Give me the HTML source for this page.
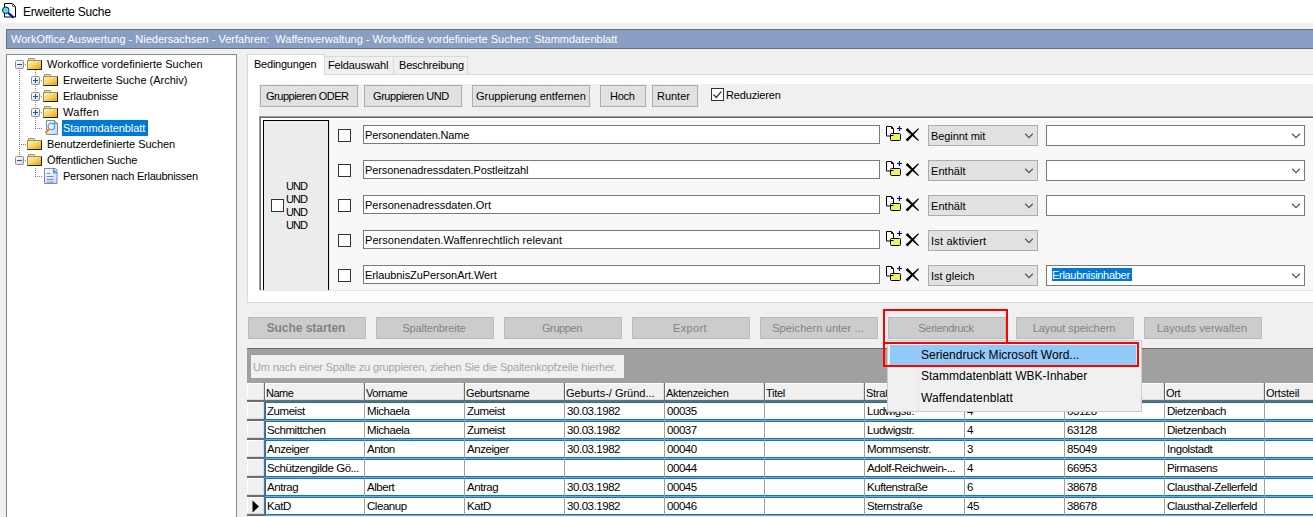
<!DOCTYPE html>
<html><head><meta charset="utf-8"><style>
*{box-sizing:border-box;margin:0;padding:0}
html,body{width:1313px;height:517px;overflow:hidden;background:#f0f0f0;font-family:"Liberation Sans",sans-serif;font-size:11px;color:#000}
body{position:relative}
.a{position:absolute}
.t{position:absolute;white-space:pre;line-height:14px}
svg{position:absolute;overflow:visible}
</style></head><body>
<div class="a" style="left:0px;top:0px;width:1313px;height:23px;background:#fff"></div>
<svg style="left:0;top:0" width="20" height="20" viewBox="0 0 20 20">
<path d="M4.5 3.5h8l3 3v10.5h-11z" fill="#fff" stroke="#000" stroke-width="1"/>
<path d="M12.5 3.5v3h3" fill="none" stroke="#777" stroke-width="1"/>
<path d="M9 13.5l4 3.5" stroke="#0000e0" stroke-width="2.2" stroke-linecap="round"/>
<circle cx="5.8" cy="10.3" r="3.3" fill="#38e8f0" stroke="#222" stroke-width="1"/>
</svg>
<div class="t" style="left:23px;top:5px;font-size:12px;letter-spacing:-0.233px">Erweiterte Suche</div>
<div class="a" style="left:6px;top:29px;width:1320px;height:20px;background:#889ec2;border:1px solid #6d6d6d"></div>
<div class="t" style="left:11px;top:32px;color:#fff">WorkOffice Auswertung - Niedersachsen - Verfahren:  Waffenverwaltung - Workoffice vordefinierte Suchen: Stammdatenblatt</div>
<div class="a" style="left:6px;top:54px;width:231px;height:480px;background:#fff;border:1px solid #828790"></div>
<div class="a" style="left:19px;top:70px;width:1px;height:85px;background:repeating-linear-gradient(#808080 0 1px,transparent 1px 2px)"></div>
<div class="a" style="left:21px;top:144px;width:5px;height:1px;background:repeating-linear-gradient(90deg,#808080 0 1px,transparent 1px 2px)"></div>
<div class="a" style="left:25px;top:64px;width:1px;height:1px;background:repeating-linear-gradient(90deg,#808080 0 1px,transparent 1px 2px)"></div>
<div class="a" style="left:25px;top:160px;width:1px;height:1px;background:repeating-linear-gradient(90deg,#808080 0 1px,transparent 1px 2px)"></div>
<div class="a" style="left:35px;top:70px;width:1px;height:5px;background:repeating-linear-gradient(#808080 0 1px,transparent 1px 2px)"></div>
<div class="a" style="left:35px;top:86px;width:1px;height:5px;background:repeating-linear-gradient(#808080 0 1px,transparent 1px 2px)"></div>
<div class="a" style="left:35px;top:102px;width:1px;height:5px;background:repeating-linear-gradient(#808080 0 1px,transparent 1px 2px)"></div>
<div class="a" style="left:35px;top:118px;width:1px;height:11px;background:repeating-linear-gradient(#808080 0 1px,transparent 1px 2px)"></div>
<div class="a" style="left:41px;top:80px;width:1px;height:1px;background:repeating-linear-gradient(90deg,#808080 0 1px,transparent 1px 2px)"></div>
<div class="a" style="left:41px;top:96px;width:1px;height:1px;background:repeating-linear-gradient(90deg,#808080 0 1px,transparent 1px 2px)"></div>
<div class="a" style="left:41px;top:112px;width:1px;height:1px;background:repeating-linear-gradient(90deg,#808080 0 1px,transparent 1px 2px)"></div>
<div class="a" style="left:37px;top:128px;width:5px;height:1px;background:repeating-linear-gradient(90deg,#808080 0 1px,transparent 1px 2px)"></div>
<div class="a" style="left:35px;top:168px;width:1px;height:9px;background:repeating-linear-gradient(#808080 0 1px,transparent 1px 2px)"></div>
<div class="a" style="left:37px;top:176px;width:5px;height:1px;background:repeating-linear-gradient(90deg,#808080 0 1px,transparent 1px 2px)"></div>
<svg style="left:15px;top:60px" width="9" height="9" viewBox="0 0 9 9"><defs><linearGradient id="pg" x1="0" y1="0" x2="1" y2="1"><stop offset="0" stop-color="#fff"/><stop offset="1" stop-color="#d4d4d4"/></linearGradient></defs>
<rect x="0.5" y="0.5" width="8" height="8" rx="1" fill="url(#pg)" stroke="#8f8f8f"/><path d="M2 4.5h5" stroke="#2a4c9c" stroke-width="1"/></svg>
<svg style="left:27px;top:56px" width="16" height="16" viewBox="0 0 16 16"><defs><linearGradient id="fg" x1="0" y1="0" x2="1" y2="1"><stop offset="0" stop-color="#fff8c0"/><stop offset="0.55" stop-color="#f5cf55"/><stop offset="1" stop-color="#e3961c"/></linearGradient></defs>
<path d="M1.5 4.5V2.5h5.5l1 2" fill="#f6e6a0" stroke="#9b8f70"/>
<rect x="0.5" y="4.5" width="14" height="9" fill="url(#fg)" stroke="#9b8f70"/>
<path d="M14.5 4.5v9h-14" fill="none" stroke="#2a1f0c"/>
</svg>
<div class="t" style="left:47px;top:57px">Workoffice vordefinierte Suchen</div>
<svg style="left:31px;top:76px" width="9" height="9" viewBox="0 0 9 9">
<rect x="0.5" y="0.5" width="8" height="8" rx="1" fill="url(#pg)" stroke="#8f8f8f"/><path d="M2 4.5h5" stroke="#2a4c9c" stroke-width="1"/><path d="M4.5 2v5" stroke="#2a4c9c" stroke-width="1"/></svg>
<svg style="left:43px;top:72px" width="16" height="16" viewBox="0 0 16 16">
<path d="M1.5 4.5V2.5h5.5l1 2" fill="#f6e6a0" stroke="#9b8f70"/>
<rect x="0.5" y="4.5" width="14" height="9" fill="url(#fg)" stroke="#9b8f70"/>
<path d="M14.5 4.5v9h-14" fill="none" stroke="#2a1f0c"/>
</svg>
<div class="t" style="left:63px;top:73px;letter-spacing:-0.012px">Erweiterte Suche (Archiv)</div>
<svg style="left:31px;top:92px" width="9" height="9" viewBox="0 0 9 9">
<rect x="0.5" y="0.5" width="8" height="8" rx="1" fill="url(#pg)" stroke="#8f8f8f"/><path d="M2 4.5h5" stroke="#2a4c9c" stroke-width="1"/><path d="M4.5 2v5" stroke="#2a4c9c" stroke-width="1"/></svg>
<svg style="left:43px;top:88px" width="16" height="16" viewBox="0 0 16 16">
<path d="M1.5 4.5V2.5h5.5l1 2" fill="#f6e6a0" stroke="#9b8f70"/>
<rect x="0.5" y="4.5" width="14" height="9" fill="url(#fg)" stroke="#9b8f70"/>
<path d="M14.5 4.5v9h-14" fill="none" stroke="#2a1f0c"/>
</svg>
<div class="t" style="left:63px;top:89px;letter-spacing:-0.23px">Erlaubnisse</div>
<svg style="left:31px;top:108px" width="9" height="9" viewBox="0 0 9 9">
<rect x="0.5" y="0.5" width="8" height="8" rx="1" fill="url(#pg)" stroke="#8f8f8f"/><path d="M2 4.5h5" stroke="#2a4c9c" stroke-width="1"/><path d="M4.5 2v5" stroke="#2a4c9c" stroke-width="1"/></svg>
<svg style="left:43px;top:104px" width="16" height="16" viewBox="0 0 16 16">
<path d="M1.5 4.5V2.5h5.5l1 2" fill="#f6e6a0" stroke="#9b8f70"/>
<rect x="0.5" y="4.5" width="14" height="9" fill="url(#fg)" stroke="#9b8f70"/>
<path d="M14.5 4.5v9h-14" fill="none" stroke="#2a1f0c"/>
</svg>
<div class="t" style="left:63px;top:105px;letter-spacing:0.32px">Waffen</div>
<svg style="left:43px;top:119px" width="16" height="17" viewBox="0 0 16 17">
<defs><linearGradient id="dg" x1="0" y1="0" x2="1" y2="1"><stop offset="0" stop-color="#ffffff"/><stop offset="1" stop-color="#bcd8f4"/></linearGradient></defs>
<path d="M3.5 1.5h8l3 3v11h-11z" fill="url(#dg)" stroke="#6d86c4"/>
<path d="M11.5 1.5v3h3" fill="#9cc8f0" stroke="#6d86c4"/>
<circle cx="8.4" cy="7.4" r="3.2" fill="#dff4ff" stroke="#6d8ccc" stroke-width="1.2"/>
<path d="M5.8 10.2l-2.8 3.2" stroke="#e0902a" stroke-width="2.2" stroke-linecap="round"/>
</svg>
<div class="a" style="left:62px;top:120px;width:86px;height:16px;background:#0078d7"></div>
<div class="t" style="left:63px;top:121px;letter-spacing:-0.057px;color:#fff">Stammdatenblatt</div>
<svg style="left:27px;top:136px" width="16" height="16" viewBox="0 0 16 16">
<path d="M1.5 4.5V2.5h5.5l1 2" fill="#f6e6a0" stroke="#9b8f70"/>
<rect x="0.5" y="4.5" width="14" height="9" fill="url(#fg)" stroke="#9b8f70"/>
<path d="M14.5 4.5v9h-14" fill="none" stroke="#2a1f0c"/>
</svg>
<div class="t" style="left:47px;top:137px;letter-spacing:-0.062px">Benutzerdefinierte Suchen</div>
<svg style="left:15px;top:156px" width="9" height="9" viewBox="0 0 9 9">
<rect x="0.5" y="0.5" width="8" height="8" rx="1" fill="url(#pg)" stroke="#8f8f8f"/><path d="M2 4.5h5" stroke="#2a4c9c" stroke-width="1"/></svg>
<svg style="left:27px;top:152px" width="16" height="16" viewBox="0 0 16 16">
<path d="M1.5 4.5V2.5h5.5l1 2" fill="#f6e6a0" stroke="#9b8f70"/>
<rect x="0.5" y="4.5" width="14" height="9" fill="url(#fg)" stroke="#9b8f70"/>
<path d="M14.5 4.5v9h-14" fill="none" stroke="#2a1f0c"/>
</svg>
<div class="t" style="left:47px;top:153px;letter-spacing:-0.147px">Öffentlichen Suche</div>
<svg style="left:43px;top:167px" width="16" height="17" viewBox="0 0 16 17">
<defs><linearGradient id="dg2" x1="0" y1="0" x2="1" y2="1"><stop offset="0" stop-color="#ffffff"/><stop offset="1" stop-color="#b8dcf6"/></linearGradient></defs>
<path d="M1.5 1.5h11l1.5 1.5v13.5h-12.5z" fill="url(#dg2)" stroke="#7a86c0"/>
<path d="M10.5 1.5v4.5h4" fill="#5aa8ee" stroke="#7a86c0"/>
<path d="M3.5 6.5h3.5M3.5 9.5h7M3.5 12.5h7M3.5 15h7" stroke="#7f86b8" stroke-width="1"/>
</svg>
<div class="t" style="left:63px;top:169px;letter-spacing:-0.224px">Personen nach Erlaubnissen</div>
<div class="a" style="left:247px;top:74px;width:1080px;height:229px;background:#fff;border:1px solid #d9d9d9"></div>
<div class="a" style="left:324px;top:56px;width:70px;height:19px;background:#f0f0f0;border:1px solid #d9d9d9"></div>
<div class="a" style="left:393px;top:56px;width:75px;height:19px;background:#f0f0f0;border:1px solid #d9d9d9"></div>
<div class="a" style="left:247px;top:54px;width:78px;height:21px;background:#fff;border:1px solid #d9d9d9;border-bottom:none"></div>
<div class="a" style="left:248px;top:74px;width:76px;height:1px;background:#fff"></div>
<div class="t" style="left:254px;top:57px;letter-spacing:-0.23px">Bedingungen</div>
<div class="t" style="left:328px;top:58px;letter-spacing:-0.14px">Feldauswahl</div>
<div class="t" style="left:399px;top:58px;letter-spacing:-0.2px">Beschreibung</div>
<div class="a" style="left:259px;top:84px;width:1060px;height:32px;background:#f0f0f0"></div>
<div class="a" style="left:260px;top:85px;width:98px;height:22px;background:#e1e1e1;border:1px solid #adadad"></div>
<div class="t" style="left:266px;top:89px;letter-spacing:-0.486px">Gruppieren ODER</div>
<div class="a" style="left:364px;top:85px;width:98px;height:22px;background:#e1e1e1;border:1px solid #adadad"></div>
<div class="t" style="left:373px;top:89px;letter-spacing:-0.431px">Gruppieren UND</div>
<div class="a" style="left:472px;top:85px;width:118px;height:22px;background:#e1e1e1;border:1px solid #adadad"></div>
<div class="t" style="left:476px;top:89px;letter-spacing:-0.045px">Gruppierung entfernen</div>
<div class="a" style="left:600px;top:85px;width:46px;height:22px;background:#e1e1e1;border:1px solid #adadad"></div>
<div class="t" style="left:610px;top:89px;letter-spacing:-0.233px">Hoch</div>
<div class="a" style="left:652px;top:85px;width:46px;height:22px;background:#e1e1e1;border:1px solid #adadad"></div>
<div class="t" style="left:657px;top:89px;letter-spacing:-0.02px">Runter</div>
<div class="a" style="left:711px;top:88px;width:13px;height:13px;background:#fff;border:1px solid #333"></div>
<svg style="left:711px;top:88px" width="13" height="13" viewBox="0 0 13 13"><path d="M2.5 6.5l2.8 3 5-6" fill="none" stroke="#333" stroke-width="1.2"/></svg>
<div class="t" style="left:726px;top:88px;letter-spacing:-0.156px">Reduzieren</div>
<div class="a" style="left:259px;top:116px;width:1060px;height:175px;background:#f8f8f8"></div>
<div class="a" style="left:259px;top:116px;width:1060px;height:1px;background:#a0a0a0"></div>
<div class="a" style="left:259px;top:117px;width:1060px;height:1px;background:#696969"></div>
<div class="a" style="left:259px;top:116px;width:1px;height:175px;background:#a0a0a0"></div>
<div class="a" style="left:260px;top:117px;width:1px;height:174px;background:#696969"></div>
<div class="a" style="left:261px;top:118px;width:1060px;height:2px;background:#fff"></div>
<div class="a" style="left:261px;top:118px;width:2px;height:173px;background:#fff"></div>
<div class="a" style="left:263px;top:120px;width:66px;height:171px;background:#ececec;border:1px solid #000;border-bottom:none"></div>
<div class="a" style="left:329px;top:120px;width:1px;height:170px;background:#e2efff"></div>
<div class="a" style="left:259px;top:290px;width:1060px;height:1px;background:#e3e3e3"></div>
<div class="a" style="left:271px;top:199px;width:13px;height:13px;background:#fff;border:1px solid #333"></div>
<div class="t" style="left:286px;top:179px;letter-spacing:-1.0px">UND</div>
<div class="t" style="left:286px;top:192px;letter-spacing:-1.0px">UND</div>
<div class="t" style="left:286px;top:205px;letter-spacing:-1.0px">UND</div>
<div class="t" style="left:286px;top:218px;letter-spacing:-1.0px">UND</div>
<div class="a" style="left:338px;top:129px;width:13px;height:13px;background:#fff;border:1px solid #333"></div>
<div class="a" style="left:363px;top:125px;width:517px;height:19px;background:#fff;border:1px solid #7a7a7a"></div>
<div class="t" style="left:365px;top:128px;letter-spacing:-0.153px">Personendaten.Name</div>
<svg style="left:886px;top:126px" width="17" height="16" viewBox="0 0 17 16">
<path d="M0.5 0.5h5l2 2v7.5h-7z" fill="#fff" stroke="#000"/>
<path d="M5.5 0.5v2h2" fill="none" stroke="#000"/>
<rect x="4.5" y="7.5" width="10" height="7" rx="1" fill="#f2f25a" stroke="#000"/>
<path d="M4.5 9.5h3" stroke="#000"/>
<path d="M13.5 0v5M11 2.5h5" stroke="#00008b" stroke-width="1.2"/>
</svg>
<svg style="left:905px;top:128px" width="15" height="14" viewBox="0 0 15 14">
<path d="M0.63 2.01 L13.22 13.00 L13.98 12.20 L2.57 -0.01z M13.21 0.21 L0.62 11.40 L2.58 13.40 L13.99 0.99z" fill="#000"/>
</svg>
<div class="a" style="left:928px;top:125px;width:110px;height:21px;background:#e1e1e1;border:1px solid #adadad"></div>
<div class="t" style="left:931px;top:129px;letter-spacing:-0.08px">Beginnt mit</div>
<svg style="left:1024px;top:133px" width="10" height="6" viewBox="0 0 10 6"><path d="M1.2 0.8l3.8 3.9l3.8-3.9" fill="none" stroke="#555" stroke-width="1.25"/></svg>
<div class="a" style="left:1046px;top:125px;width:259px;height:21px;background:#fff;border:1px solid #7a7a7a"></div>
<svg style="left:1291px;top:133px" width="10" height="6" viewBox="0 0 10 6"><path d="M1.2 0.8l3.8 3.9l3.8-3.9" fill="none" stroke="#555" stroke-width="1.25"/></svg>
<div class="a" style="left:338px;top:164px;width:13px;height:13px;background:#fff;border:1px solid #333"></div>
<div class="a" style="left:363px;top:160px;width:517px;height:19px;background:#fff;border:1px solid #7a7a7a"></div>
<div class="t" style="left:365px;top:163px;letter-spacing:-0.11px">Personenadressdaten.Postleitzahl</div>
<svg style="left:886px;top:161px" width="17" height="16" viewBox="0 0 17 16">
<path d="M0.5 0.5h5l2 2v7.5h-7z" fill="#fff" stroke="#000"/>
<path d="M5.5 0.5v2h2" fill="none" stroke="#000"/>
<rect x="4.5" y="7.5" width="10" height="7" rx="1" fill="#f2f25a" stroke="#000"/>
<path d="M4.5 9.5h3" stroke="#000"/>
<path d="M13.5 0v5M11 2.5h5" stroke="#00008b" stroke-width="1.2"/>
</svg>
<svg style="left:905px;top:163px" width="15" height="14" viewBox="0 0 15 14">
<path d="M0.63 2.01 L13.22 13.00 L13.98 12.20 L2.57 -0.01z M13.21 0.21 L0.62 11.40 L2.58 13.40 L13.99 0.99z" fill="#000"/>
</svg>
<div class="a" style="left:928px;top:160px;width:110px;height:21px;background:#e1e1e1;border:1px solid #adadad"></div>
<div class="t" style="left:931px;top:164px;letter-spacing:0.05px">Enthält</div>
<svg style="left:1024px;top:168px" width="10" height="6" viewBox="0 0 10 6"><path d="M1.2 0.8l3.8 3.9l3.8-3.9" fill="none" stroke="#555" stroke-width="1.25"/></svg>
<div class="a" style="left:1046px;top:160px;width:259px;height:21px;background:#fff;border:1px solid #7a7a7a"></div>
<svg style="left:1291px;top:168px" width="10" height="6" viewBox="0 0 10 6"><path d="M1.2 0.8l3.8 3.9l3.8-3.9" fill="none" stroke="#555" stroke-width="1.25"/></svg>
<div class="a" style="left:338px;top:199px;width:13px;height:13px;background:#fff;border:1px solid #333"></div>
<div class="a" style="left:363px;top:195px;width:517px;height:19px;background:#fff;border:1px solid #7a7a7a"></div>
<div class="t" style="left:365px;top:198px;letter-spacing:0.005px">Personenadressdaten.Ort</div>
<svg style="left:886px;top:196px" width="17" height="16" viewBox="0 0 17 16">
<path d="M0.5 0.5h5l2 2v7.5h-7z" fill="#fff" stroke="#000"/>
<path d="M5.5 0.5v2h2" fill="none" stroke="#000"/>
<rect x="4.5" y="7.5" width="10" height="7" rx="1" fill="#f2f25a" stroke="#000"/>
<path d="M4.5 9.5h3" stroke="#000"/>
<path d="M13.5 0v5M11 2.5h5" stroke="#00008b" stroke-width="1.2"/>
</svg>
<svg style="left:905px;top:198px" width="15" height="14" viewBox="0 0 15 14">
<path d="M0.63 2.01 L13.22 13.00 L13.98 12.20 L2.57 -0.01z M13.21 0.21 L0.62 11.40 L2.58 13.40 L13.99 0.99z" fill="#000"/>
</svg>
<div class="a" style="left:928px;top:195px;width:110px;height:21px;background:#e1e1e1;border:1px solid #adadad"></div>
<div class="t" style="left:931px;top:199px;letter-spacing:0.05px">Enthält</div>
<svg style="left:1024px;top:203px" width="10" height="6" viewBox="0 0 10 6"><path d="M1.2 0.8l3.8 3.9l3.8-3.9" fill="none" stroke="#555" stroke-width="1.25"/></svg>
<div class="a" style="left:1046px;top:195px;width:259px;height:21px;background:#fff;border:1px solid #7a7a7a"></div>
<svg style="left:1291px;top:203px" width="10" height="6" viewBox="0 0 10 6"><path d="M1.2 0.8l3.8 3.9l3.8-3.9" fill="none" stroke="#555" stroke-width="1.25"/></svg>
<div class="a" style="left:338px;top:234px;width:13px;height:13px;background:#fff;border:1px solid #333"></div>
<div class="a" style="left:363px;top:230px;width:517px;height:19px;background:#fff;border:1px solid #7a7a7a"></div>
<div class="t" style="left:365px;top:233px;letter-spacing:0.054px">Personendaten.Waffenrechtlich relevant</div>
<svg style="left:886px;top:231px" width="17" height="16" viewBox="0 0 17 16">
<path d="M0.5 0.5h5l2 2v7.5h-7z" fill="#fff" stroke="#000"/>
<path d="M5.5 0.5v2h2" fill="none" stroke="#000"/>
<rect x="4.5" y="7.5" width="10" height="7" rx="1" fill="#f2f25a" stroke="#000"/>
<path d="M4.5 9.5h3" stroke="#000"/>
<path d="M13.5 0v5M11 2.5h5" stroke="#00008b" stroke-width="1.2"/>
</svg>
<svg style="left:905px;top:233px" width="15" height="14" viewBox="0 0 15 14">
<path d="M0.63 2.01 L13.22 13.00 L13.98 12.20 L2.57 -0.01z M13.21 0.21 L0.62 11.40 L2.58 13.40 L13.99 0.99z" fill="#000"/>
</svg>
<div class="a" style="left:928px;top:230px;width:110px;height:21px;background:#e1e1e1;border:1px solid #adadad"></div>
<div class="t" style="left:931px;top:234px;letter-spacing:0.208px">Ist aktiviert</div>
<svg style="left:1024px;top:238px" width="10" height="6" viewBox="0 0 10 6"><path d="M1.2 0.8l3.8 3.9l3.8-3.9" fill="none" stroke="#555" stroke-width="1.25"/></svg>
<div class="a" style="left:338px;top:269px;width:13px;height:13px;background:#fff;border:1px solid #333"></div>
<div class="a" style="left:363px;top:265px;width:517px;height:19px;background:#fff;border:1px solid #7a7a7a"></div>
<div class="t" style="left:365px;top:268px;letter-spacing:-0.083px">ErlaubnisZuPersonArt.Wert</div>
<svg style="left:886px;top:266px" width="17" height="16" viewBox="0 0 17 16">
<path d="M0.5 0.5h5l2 2v7.5h-7z" fill="#fff" stroke="#000"/>
<path d="M5.5 0.5v2h2" fill="none" stroke="#000"/>
<rect x="4.5" y="7.5" width="10" height="7" rx="1" fill="#f2f25a" stroke="#000"/>
<path d="M4.5 9.5h3" stroke="#000"/>
<path d="M13.5 0v5M11 2.5h5" stroke="#00008b" stroke-width="1.2"/>
</svg>
<svg style="left:905px;top:268px" width="15" height="14" viewBox="0 0 15 14">
<path d="M0.63 2.01 L13.22 13.00 L13.98 12.20 L2.57 -0.01z M13.21 0.21 L0.62 11.40 L2.58 13.40 L13.99 0.99z" fill="#000"/>
</svg>
<div class="a" style="left:928px;top:265px;width:110px;height:21px;background:#e1e1e1;border:1px solid #adadad"></div>
<div class="t" style="left:931px;top:269px;letter-spacing:-0.011px">Ist gleich</div>
<svg style="left:1024px;top:273px" width="10" height="6" viewBox="0 0 10 6"><path d="M1.2 0.8l3.8 3.9l3.8-3.9" fill="none" stroke="#555" stroke-width="1.25"/></svg>
<div class="a" style="left:1046px;top:265px;width:259px;height:21px;background:#fff;border:1px solid #7a7a7a"></div>
<svg style="left:1291px;top:273px" width="10" height="6" viewBox="0 0 10 6"><path d="M1.2 0.8l3.8 3.9l3.8-3.9" fill="none" stroke="#555" stroke-width="1.25"/></svg>
<div class="a" style="left:1052px;top:268px;width:80px;height:13px;background:#0078d7"></div>
<div class="t" style="left:1052px;top:268px;letter-spacing:-0.3px;color:#fff">Erlaubnisinhaber</div>
<div class="a" style="left:248px;top:317px;width:118px;height:22px;background:#cccccc;border:1px solid #bcbcbc"></div>
<div class="t" style="left:247px;top:321px;width:118px;text-align:center;color:#838383;letter-spacing:-0.05px;font-weight:bold;font-size:12px;">Suche starten</div>
<div class="a" style="left:376px;top:317px;width:118px;height:22px;background:#cccccc;border:1px solid #bcbcbc"></div>
<div class="t" style="left:375px;top:321px;width:118px;text-align:center;color:#838383;letter-spacing:-0.125px;">Spaltenbreite</div>
<div class="a" style="left:504px;top:317px;width:118px;height:22px;background:#cccccc;border:1px solid #bcbcbc"></div>
<div class="t" style="left:503px;top:321px;width:118px;text-align:center;color:#838383;letter-spacing:-0.383px;">Gruppen</div>
<div class="a" style="left:632px;top:317px;width:118px;height:22px;background:#cccccc;border:1px solid #bcbcbc"></div>
<div class="t" style="left:631px;top:321px;width:118px;text-align:center;color:#838383;letter-spacing:0.34px;">Export</div>
<div class="a" style="left:760px;top:317px;width:118px;height:22px;background:#cccccc;border:1px solid #bcbcbc"></div>
<div class="t" style="left:759px;top:321px;width:118px;text-align:center;color:#838383;letter-spacing:0.094px;">Speichern unter ...</div>
<div class="a" style="left:888px;top:317px;width:118px;height:22px;background:#cccccc;border:1px solid #bcbcbc"></div>
<div class="t" style="left:887px;top:321px;width:118px;text-align:center;color:#838383;letter-spacing:-0.31px;">Seriendruck</div>
<div class="a" style="left:1016px;top:317px;width:118px;height:22px;background:#cccccc;border:1px solid #bcbcbc"></div>
<div class="t" style="left:1015px;top:321px;width:118px;text-align:center;color:#838383;letter-spacing:-0.067px;">Layout speichern</div>
<div class="a" style="left:1144px;top:317px;width:118px;height:22px;background:#cccccc;border:1px solid #bcbcbc"></div>
<div class="t" style="left:1143px;top:321px;width:118px;text-align:center;color:#838383;letter-spacing:0.106px;">Layouts verwalten</div>
<div class="a" style="left:247px;top:348px;width:1070px;height:35px;background:#a0a0a0;border-top:1px solid #696969"></div>
<div class="a" style="left:251px;top:355px;width:373px;height:23px;background:#f0f0f0"></div>
<div class="t" style="left:253px;top:360px;letter-spacing:-0.147px;color:#a2a4b0">Um nach einer Spalte zu gruppieren, ziehen Sie die Spaltenkopfzeile hierher.</div>
<div class="a" style="left:247px;top:383px;width:1070px;height:16px;background:#f0f0f0"></div>
<div class="a" style="left:247px;top:383px;width:1070px;height:1px;background:#fff"></div>
<div class="a" style="left:247px;top:383px;width:1px;height:16px;background:#fff"></div>
<div class="a" style="left:247px;top:399px;width:1070px;height:1px;background:#dcdcdc"></div>
<div class="a" style="left:247px;top:400px;width:1070px;height:2px;background:#6d6d6d"></div>
<div class="a" style="left:263px;top:383px;width:1px;height:17px;background:#dcdcdc"></div>
<div class="a" style="left:264px;top:383px;width:1px;height:19px;background:#6d6d6d"></div>
<div class="a" style="left:265px;top:383px;width:1px;height:16px;background:#fff"></div>
<div class="t" style="left:266px;top:386px;letter-spacing:-0.5px">Name</div>
<div class="a" style="left:363px;top:383px;width:1px;height:17px;background:#dcdcdc"></div>
<div class="a" style="left:364px;top:383px;width:1px;height:19px;background:#6d6d6d"></div>
<div class="a" style="left:365px;top:383px;width:1px;height:16px;background:#fff"></div>
<div class="t" style="left:366px;top:386px;letter-spacing:-0.4px">Vorname</div>
<div class="a" style="left:463px;top:383px;width:1px;height:17px;background:#dcdcdc"></div>
<div class="a" style="left:464px;top:383px;width:1px;height:19px;background:#6d6d6d"></div>
<div class="a" style="left:465px;top:383px;width:1px;height:16px;background:#fff"></div>
<div class="t" style="left:466px;top:386px;letter-spacing:-0.3px">Geburtsname</div>
<div class="a" style="left:563px;top:383px;width:1px;height:17px;background:#dcdcdc"></div>
<div class="a" style="left:564px;top:383px;width:1px;height:19px;background:#6d6d6d"></div>
<div class="a" style="left:565px;top:383px;width:1px;height:16px;background:#fff"></div>
<div class="t" style="left:566px;top:386px">Geburts-/ Gründ...</div>
<div class="a" style="left:663px;top:383px;width:1px;height:17px;background:#dcdcdc"></div>
<div class="a" style="left:664px;top:383px;width:1px;height:19px;background:#6d6d6d"></div>
<div class="a" style="left:665px;top:383px;width:1px;height:16px;background:#fff"></div>
<div class="t" style="left:666px;top:386px;letter-spacing:-0.3px">Aktenzeichen</div>
<div class="a" style="left:763px;top:383px;width:1px;height:17px;background:#dcdcdc"></div>
<div class="a" style="left:764px;top:383px;width:1px;height:19px;background:#6d6d6d"></div>
<div class="a" style="left:765px;top:383px;width:1px;height:16px;background:#fff"></div>
<div class="t" style="left:766px;top:386px;letter-spacing:-0.3px">Titel</div>
<div class="a" style="left:863px;top:383px;width:1px;height:17px;background:#dcdcdc"></div>
<div class="a" style="left:864px;top:383px;width:1px;height:19px;background:#6d6d6d"></div>
<div class="a" style="left:865px;top:383px;width:1px;height:16px;background:#fff"></div>
<div class="t" style="left:866px;top:386px;letter-spacing:-0.3px">Straße</div>
<div class="a" style="left:963px;top:383px;width:1px;height:17px;background:#dcdcdc"></div>
<div class="a" style="left:964px;top:383px;width:1px;height:19px;background:#6d6d6d"></div>
<div class="a" style="left:965px;top:383px;width:1px;height:16px;background:#fff"></div>
<div class="t" style="left:966px;top:386px;letter-spacing:-0.3px">Hausnummer</div>
<div class="a" style="left:1063px;top:383px;width:1px;height:17px;background:#dcdcdc"></div>
<div class="a" style="left:1064px;top:383px;width:1px;height:19px;background:#6d6d6d"></div>
<div class="a" style="left:1065px;top:383px;width:1px;height:16px;background:#fff"></div>
<div class="t" style="left:1066px;top:386px;letter-spacing:-0.3px">PLZ</div>
<div class="a" style="left:1163px;top:383px;width:1px;height:17px;background:#dcdcdc"></div>
<div class="a" style="left:1164px;top:383px;width:1px;height:19px;background:#6d6d6d"></div>
<div class="a" style="left:1165px;top:383px;width:1px;height:16px;background:#fff"></div>
<div class="t" style="left:1166px;top:386px;letter-spacing:-0.3px">Ort</div>
<div class="a" style="left:1263px;top:383px;width:1px;height:17px;background:#dcdcdc"></div>
<div class="a" style="left:1264px;top:383px;width:1px;height:19px;background:#6d6d6d"></div>
<div class="a" style="left:1265px;top:383px;width:1px;height:16px;background:#fff"></div>
<div class="t" style="left:1266px;top:386px;letter-spacing:-0.2px">Ortsteil</div>
<div class="a" style="left:1363px;top:383px;width:1px;height:17px;background:#dcdcdc"></div>
<div class="a" style="left:1364px;top:383px;width:1px;height:19px;background:#6d6d6d"></div>
<div class="a" style="left:247px;top:402px;width:16px;height:19px;background:#f0f0f0"></div>
<div class="a" style="left:247px;top:402px;width:16px;height:1px;background:#fff"></div>
<div class="a" style="left:247px;top:402px;width:1px;height:16px;background:#fff"></div>
<div class="a" style="left:247px;top:418px;width:16px;height:1px;background:#dcdcdc"></div>
<div class="a" style="left:247px;top:419px;width:17px;height:2px;background:#6d6d6d"></div>
<div class="a" style="left:263px;top:402px;width:1px;height:17px;background:#dcdcdc"></div>
<div class="a" style="left:264px;top:402px;width:1px;height:19px;background:#6d6d6d"></div>
<div class="a" style="left:265px;top:402px;width:1060px;height:19px;background:#fff"></div>
<div class="a" style="left:265px;top:402px;width:1060px;height:1px;background:#0078d7"></div>
<div class="a" style="left:265px;top:419px;width:1060px;height:1px;background:#0078d7"></div>
<div class="a" style="left:265px;top:420px;width:1060px;height:1px;background:#a0a0a0"></div>
<div class="a" style="left:265px;top:402px;width:1px;height:18px;background:#0078d7"></div>
<div class="a" style="left:364px;top:402px;width:1px;height:19px;background:#a0a0a0"></div>
<div class="t" style="left:267px;top:404px;font-size:11.5px;letter-spacing:-0.45px">Zumeist</div>
<div class="a" style="left:464px;top:402px;width:1px;height:19px;background:#a0a0a0"></div>
<div class="t" style="left:367px;top:404px;font-size:11.5px;letter-spacing:-0.45px">Michaela</div>
<div class="a" style="left:564px;top:402px;width:1px;height:19px;background:#a0a0a0"></div>
<div class="t" style="left:467px;top:404px;font-size:11.5px;letter-spacing:-0.45px">Zumeist</div>
<div class="a" style="left:664px;top:402px;width:1px;height:19px;background:#a0a0a0"></div>
<div class="t" style="left:567px;top:404px;font-size:11.5px;letter-spacing:-0.45px">30.03.1982</div>
<div class="a" style="left:764px;top:402px;width:1px;height:19px;background:#a0a0a0"></div>
<div class="t" style="left:667px;top:404px;font-size:11.5px;letter-spacing:-0.45px">00035</div>
<div class="a" style="left:864px;top:402px;width:1px;height:19px;background:#a0a0a0"></div>
<div class="a" style="left:964px;top:402px;width:1px;height:19px;background:#a0a0a0"></div>
<div class="t" style="left:867px;top:404px;font-size:11.5px;letter-spacing:-0.45px">Ludwigstr.</div>
<div class="a" style="left:1064px;top:402px;width:1px;height:19px;background:#a0a0a0"></div>
<div class="t" style="left:967px;top:404px;font-size:11.5px;letter-spacing:-0.45px">4</div>
<div class="a" style="left:1164px;top:402px;width:1px;height:19px;background:#a0a0a0"></div>
<div class="t" style="left:1067px;top:404px;font-size:11.5px;letter-spacing:-0.45px">63128</div>
<div class="a" style="left:1264px;top:402px;width:1px;height:19px;background:#a0a0a0"></div>
<div class="t" style="left:1167px;top:404px;font-size:11.5px;letter-spacing:-0.45px">Dietzenbach</div>
<div class="a" style="left:1364px;top:402px;width:1px;height:19px;background:#a0a0a0"></div>
<div class="a" style="left:247px;top:421px;width:16px;height:19px;background:#f0f0f0"></div>
<div class="a" style="left:247px;top:421px;width:16px;height:1px;background:#fff"></div>
<div class="a" style="left:247px;top:421px;width:1px;height:16px;background:#fff"></div>
<div class="a" style="left:247px;top:437px;width:16px;height:1px;background:#dcdcdc"></div>
<div class="a" style="left:247px;top:438px;width:17px;height:2px;background:#6d6d6d"></div>
<div class="a" style="left:263px;top:421px;width:1px;height:17px;background:#dcdcdc"></div>
<div class="a" style="left:264px;top:421px;width:1px;height:19px;background:#6d6d6d"></div>
<div class="a" style="left:265px;top:421px;width:1060px;height:19px;background:#fff"></div>
<div class="a" style="left:265px;top:421px;width:1060px;height:1px;background:#0078d7"></div>
<div class="a" style="left:265px;top:438px;width:1060px;height:1px;background:#0078d7"></div>
<div class="a" style="left:265px;top:439px;width:1060px;height:1px;background:#a0a0a0"></div>
<div class="a" style="left:265px;top:421px;width:1px;height:18px;background:#0078d7"></div>
<div class="a" style="left:364px;top:421px;width:1px;height:19px;background:#a0a0a0"></div>
<div class="t" style="left:267px;top:423px;font-size:11.5px;letter-spacing:-0.45px">Schmittchen</div>
<div class="a" style="left:464px;top:421px;width:1px;height:19px;background:#a0a0a0"></div>
<div class="t" style="left:367px;top:423px;font-size:11.5px;letter-spacing:-0.45px">Michaela</div>
<div class="a" style="left:564px;top:421px;width:1px;height:19px;background:#a0a0a0"></div>
<div class="t" style="left:467px;top:423px;font-size:11.5px;letter-spacing:-0.45px">Zumeist</div>
<div class="a" style="left:664px;top:421px;width:1px;height:19px;background:#a0a0a0"></div>
<div class="t" style="left:567px;top:423px;font-size:11.5px;letter-spacing:-0.45px">30.03.1982</div>
<div class="a" style="left:764px;top:421px;width:1px;height:19px;background:#a0a0a0"></div>
<div class="t" style="left:667px;top:423px;font-size:11.5px;letter-spacing:-0.45px">00037</div>
<div class="a" style="left:864px;top:421px;width:1px;height:19px;background:#a0a0a0"></div>
<div class="a" style="left:964px;top:421px;width:1px;height:19px;background:#a0a0a0"></div>
<div class="t" style="left:867px;top:423px;font-size:11.5px;letter-spacing:-0.45px">Ludwigstr.</div>
<div class="a" style="left:1064px;top:421px;width:1px;height:19px;background:#a0a0a0"></div>
<div class="t" style="left:967px;top:423px;font-size:11.5px;letter-spacing:-0.45px">4</div>
<div class="a" style="left:1164px;top:421px;width:1px;height:19px;background:#a0a0a0"></div>
<div class="t" style="left:1067px;top:423px;font-size:11.5px;letter-spacing:-0.45px">63128</div>
<div class="a" style="left:1264px;top:421px;width:1px;height:19px;background:#a0a0a0"></div>
<div class="t" style="left:1167px;top:423px;font-size:11.5px;letter-spacing:-0.45px">Dietzenbach</div>
<div class="a" style="left:1364px;top:421px;width:1px;height:19px;background:#a0a0a0"></div>
<div class="a" style="left:247px;top:440px;width:16px;height:19px;background:#f0f0f0"></div>
<div class="a" style="left:247px;top:440px;width:16px;height:1px;background:#fff"></div>
<div class="a" style="left:247px;top:440px;width:1px;height:16px;background:#fff"></div>
<div class="a" style="left:247px;top:456px;width:16px;height:1px;background:#dcdcdc"></div>
<div class="a" style="left:247px;top:457px;width:17px;height:2px;background:#6d6d6d"></div>
<div class="a" style="left:263px;top:440px;width:1px;height:17px;background:#dcdcdc"></div>
<div class="a" style="left:264px;top:440px;width:1px;height:19px;background:#6d6d6d"></div>
<div class="a" style="left:265px;top:440px;width:1060px;height:19px;background:#fff"></div>
<div class="a" style="left:265px;top:440px;width:1060px;height:1px;background:#0078d7"></div>
<div class="a" style="left:265px;top:457px;width:1060px;height:1px;background:#0078d7"></div>
<div class="a" style="left:265px;top:458px;width:1060px;height:1px;background:#a0a0a0"></div>
<div class="a" style="left:265px;top:440px;width:1px;height:18px;background:#0078d7"></div>
<div class="a" style="left:364px;top:440px;width:1px;height:19px;background:#a0a0a0"></div>
<div class="t" style="left:267px;top:442px;font-size:11.5px;letter-spacing:-0.45px">Anzeiger</div>
<div class="a" style="left:464px;top:440px;width:1px;height:19px;background:#a0a0a0"></div>
<div class="t" style="left:367px;top:442px;font-size:11.5px;letter-spacing:-0.45px">Anton</div>
<div class="a" style="left:564px;top:440px;width:1px;height:19px;background:#a0a0a0"></div>
<div class="t" style="left:467px;top:442px;font-size:11.5px;letter-spacing:-0.45px">Anzeiger</div>
<div class="a" style="left:664px;top:440px;width:1px;height:19px;background:#a0a0a0"></div>
<div class="t" style="left:567px;top:442px;font-size:11.5px;letter-spacing:-0.45px">30.03.1982</div>
<div class="a" style="left:764px;top:440px;width:1px;height:19px;background:#a0a0a0"></div>
<div class="t" style="left:667px;top:442px;font-size:11.5px;letter-spacing:-0.45px">00040</div>
<div class="a" style="left:864px;top:440px;width:1px;height:19px;background:#a0a0a0"></div>
<div class="a" style="left:964px;top:440px;width:1px;height:19px;background:#a0a0a0"></div>
<div class="t" style="left:867px;top:442px;font-size:11.5px;letter-spacing:-0.45px">Mommsenstr.</div>
<div class="a" style="left:1064px;top:440px;width:1px;height:19px;background:#a0a0a0"></div>
<div class="t" style="left:967px;top:442px;font-size:11.5px;letter-spacing:-0.45px">3</div>
<div class="a" style="left:1164px;top:440px;width:1px;height:19px;background:#a0a0a0"></div>
<div class="t" style="left:1067px;top:442px;font-size:11.5px;letter-spacing:-0.45px">85049</div>
<div class="a" style="left:1264px;top:440px;width:1px;height:19px;background:#a0a0a0"></div>
<div class="t" style="left:1167px;top:442px;font-size:11.5px;letter-spacing:-0.45px">Ingolstadt</div>
<div class="a" style="left:1364px;top:440px;width:1px;height:19px;background:#a0a0a0"></div>
<div class="a" style="left:247px;top:459px;width:16px;height:19px;background:#f0f0f0"></div>
<div class="a" style="left:247px;top:459px;width:16px;height:1px;background:#fff"></div>
<div class="a" style="left:247px;top:459px;width:1px;height:16px;background:#fff"></div>
<div class="a" style="left:247px;top:475px;width:16px;height:1px;background:#dcdcdc"></div>
<div class="a" style="left:247px;top:476px;width:17px;height:2px;background:#6d6d6d"></div>
<div class="a" style="left:263px;top:459px;width:1px;height:17px;background:#dcdcdc"></div>
<div class="a" style="left:264px;top:459px;width:1px;height:19px;background:#6d6d6d"></div>
<div class="a" style="left:265px;top:459px;width:1060px;height:19px;background:#fff"></div>
<div class="a" style="left:265px;top:459px;width:1060px;height:1px;background:#0078d7"></div>
<div class="a" style="left:265px;top:476px;width:1060px;height:1px;background:#0078d7"></div>
<div class="a" style="left:265px;top:477px;width:1060px;height:1px;background:#a0a0a0"></div>
<div class="a" style="left:265px;top:459px;width:1px;height:18px;background:#0078d7"></div>
<div class="a" style="left:364px;top:459px;width:1px;height:19px;background:#a0a0a0"></div>
<div class="t" style="left:267px;top:461px;font-size:11.5px;letter-spacing:-0.45px">Schützengilde Gö...</div>
<div class="a" style="left:464px;top:459px;width:1px;height:19px;background:#a0a0a0"></div>
<div class="a" style="left:564px;top:459px;width:1px;height:19px;background:#a0a0a0"></div>
<div class="a" style="left:664px;top:459px;width:1px;height:19px;background:#a0a0a0"></div>
<div class="a" style="left:764px;top:459px;width:1px;height:19px;background:#a0a0a0"></div>
<div class="t" style="left:667px;top:461px;font-size:11.5px;letter-spacing:-0.45px">00044</div>
<div class="a" style="left:864px;top:459px;width:1px;height:19px;background:#a0a0a0"></div>
<div class="a" style="left:964px;top:459px;width:1px;height:19px;background:#a0a0a0"></div>
<div class="t" style="left:867px;top:461px;font-size:11.5px;letter-spacing:-0.45px">Adolf-Reichwein-...</div>
<div class="a" style="left:1064px;top:459px;width:1px;height:19px;background:#a0a0a0"></div>
<div class="t" style="left:967px;top:461px;font-size:11.5px;letter-spacing:-0.45px">4</div>
<div class="a" style="left:1164px;top:459px;width:1px;height:19px;background:#a0a0a0"></div>
<div class="t" style="left:1067px;top:461px;font-size:11.5px;letter-spacing:-0.45px">66953</div>
<div class="a" style="left:1264px;top:459px;width:1px;height:19px;background:#a0a0a0"></div>
<div class="t" style="left:1167px;top:461px;font-size:11.5px;letter-spacing:-0.45px">Pirmasens</div>
<div class="a" style="left:1364px;top:459px;width:1px;height:19px;background:#a0a0a0"></div>
<div class="a" style="left:247px;top:478px;width:16px;height:19px;background:#f0f0f0"></div>
<div class="a" style="left:247px;top:478px;width:16px;height:1px;background:#fff"></div>
<div class="a" style="left:247px;top:478px;width:1px;height:16px;background:#fff"></div>
<div class="a" style="left:247px;top:494px;width:16px;height:1px;background:#dcdcdc"></div>
<div class="a" style="left:247px;top:495px;width:17px;height:2px;background:#6d6d6d"></div>
<div class="a" style="left:263px;top:478px;width:1px;height:17px;background:#dcdcdc"></div>
<div class="a" style="left:264px;top:478px;width:1px;height:19px;background:#6d6d6d"></div>
<div class="a" style="left:265px;top:478px;width:1060px;height:19px;background:#fff"></div>
<div class="a" style="left:265px;top:478px;width:1060px;height:1px;background:#0078d7"></div>
<div class="a" style="left:265px;top:495px;width:1060px;height:1px;background:#0078d7"></div>
<div class="a" style="left:265px;top:496px;width:1060px;height:1px;background:#a0a0a0"></div>
<div class="a" style="left:265px;top:478px;width:1px;height:18px;background:#0078d7"></div>
<div class="a" style="left:364px;top:478px;width:1px;height:19px;background:#a0a0a0"></div>
<div class="t" style="left:267px;top:480px;font-size:11.5px;letter-spacing:-0.45px">Antrag</div>
<div class="a" style="left:464px;top:478px;width:1px;height:19px;background:#a0a0a0"></div>
<div class="t" style="left:367px;top:480px;font-size:11.5px;letter-spacing:-0.45px">Albert</div>
<div class="a" style="left:564px;top:478px;width:1px;height:19px;background:#a0a0a0"></div>
<div class="t" style="left:467px;top:480px;font-size:11.5px;letter-spacing:-0.45px">Antrag</div>
<div class="a" style="left:664px;top:478px;width:1px;height:19px;background:#a0a0a0"></div>
<div class="t" style="left:567px;top:480px;font-size:11.5px;letter-spacing:-0.45px">30.03.1982</div>
<div class="a" style="left:764px;top:478px;width:1px;height:19px;background:#a0a0a0"></div>
<div class="t" style="left:667px;top:480px;font-size:11.5px;letter-spacing:-0.45px">00045</div>
<div class="a" style="left:864px;top:478px;width:1px;height:19px;background:#a0a0a0"></div>
<div class="a" style="left:964px;top:478px;width:1px;height:19px;background:#a0a0a0"></div>
<div class="t" style="left:867px;top:480px;font-size:11.5px;letter-spacing:-0.45px">Kuftenstraße</div>
<div class="a" style="left:1064px;top:478px;width:1px;height:19px;background:#a0a0a0"></div>
<div class="t" style="left:967px;top:480px;font-size:11.5px;letter-spacing:-0.45px">6</div>
<div class="a" style="left:1164px;top:478px;width:1px;height:19px;background:#a0a0a0"></div>
<div class="t" style="left:1067px;top:480px;font-size:11.5px;letter-spacing:-0.45px">38678</div>
<div class="a" style="left:1264px;top:478px;width:1px;height:19px;background:#a0a0a0"></div>
<div class="t" style="left:1167px;top:480px;font-size:11.5px;letter-spacing:-0.45px">Clausthal-Zellerfeld</div>
<div class="a" style="left:1364px;top:478px;width:1px;height:19px;background:#a0a0a0"></div>
<div class="a" style="left:247px;top:497px;width:16px;height:19px;background:#f0f0f0"></div>
<div class="a" style="left:247px;top:497px;width:16px;height:1px;background:#fff"></div>
<div class="a" style="left:247px;top:497px;width:1px;height:16px;background:#fff"></div>
<div class="a" style="left:247px;top:513px;width:16px;height:1px;background:#dcdcdc"></div>
<div class="a" style="left:247px;top:514px;width:17px;height:2px;background:#6d6d6d"></div>
<div class="a" style="left:263px;top:497px;width:1px;height:17px;background:#dcdcdc"></div>
<div class="a" style="left:264px;top:497px;width:1px;height:19px;background:#6d6d6d"></div>
<div class="a" style="left:265px;top:497px;width:1060px;height:19px;background:#fff"></div>
<div class="a" style="left:265px;top:497px;width:1060px;height:1px;background:#0078d7"></div>
<div class="a" style="left:265px;top:514px;width:1060px;height:1px;background:#0078d7"></div>
<div class="a" style="left:265px;top:515px;width:1060px;height:1px;background:#a0a0a0"></div>
<div class="a" style="left:265px;top:497px;width:1px;height:18px;background:#0078d7"></div>
<div class="a" style="left:364px;top:497px;width:1px;height:19px;background:#a0a0a0"></div>
<div class="t" style="left:267px;top:499px;font-size:11.5px;letter-spacing:-0.45px">KatD</div>
<div class="a" style="left:464px;top:497px;width:1px;height:19px;background:#a0a0a0"></div>
<div class="t" style="left:367px;top:499px;font-size:11.5px;letter-spacing:-0.45px">Cleanup</div>
<div class="a" style="left:564px;top:497px;width:1px;height:19px;background:#a0a0a0"></div>
<div class="t" style="left:467px;top:499px;font-size:11.5px;letter-spacing:-0.45px">KatD</div>
<div class="a" style="left:664px;top:497px;width:1px;height:19px;background:#a0a0a0"></div>
<div class="t" style="left:567px;top:499px;font-size:11.5px;letter-spacing:-0.45px">30.03.1982</div>
<div class="a" style="left:764px;top:497px;width:1px;height:19px;background:#a0a0a0"></div>
<div class="t" style="left:667px;top:499px;font-size:11.5px;letter-spacing:-0.45px">00046</div>
<div class="a" style="left:864px;top:497px;width:1px;height:19px;background:#a0a0a0"></div>
<div class="a" style="left:964px;top:497px;width:1px;height:19px;background:#a0a0a0"></div>
<div class="t" style="left:867px;top:499px;font-size:11.5px;letter-spacing:-0.45px">Sternstraße</div>
<div class="a" style="left:1064px;top:497px;width:1px;height:19px;background:#a0a0a0"></div>
<div class="t" style="left:967px;top:499px;font-size:11.5px;letter-spacing:-0.45px">45</div>
<div class="a" style="left:1164px;top:497px;width:1px;height:19px;background:#a0a0a0"></div>
<div class="t" style="left:1067px;top:499px;font-size:11.5px;letter-spacing:-0.45px">38678</div>
<div class="a" style="left:1264px;top:497px;width:1px;height:19px;background:#a0a0a0"></div>
<div class="t" style="left:1167px;top:499px;font-size:11.5px;letter-spacing:-0.45px">Clausthal-Zellerfeld</div>
<div class="a" style="left:1364px;top:497px;width:1px;height:19px;background:#a0a0a0"></div>
<svg style="left:252px;top:500px" width="8" height="13" viewBox="0 0 8 13"><path d="M0.5 0.5l6.5 6l-6.5 6z" fill="#000"/></svg>
<div class="a" style="left:887px;top:340px;width:255px;height:72px;background:#f0f0f0;border:1px solid #cccccc"></div>
<div class="a" style="left:918px;top:341px;width:1px;height:70px;background:#e8e8e8"></div>
<div class="a" style="left:890px;top:345px;width:246px;height:20px;background:#91c9f7"></div>
<div class="t" style="left:921px;top:348px;font-size:12px;letter-spacing:0.021px">Seriendruck Microsoft Word...</div>
<div class="t" style="left:921px;top:369px;font-size:12px;letter-spacing:0.008px">Stammdatenblatt WBK-Inhaber</div>
<div class="t" style="left:921px;top:391px;font-size:12px;letter-spacing:0.12px">Waffendatenblatt</div>
<div class="a" style="left:883px;top:309px;width:125px;height:35px;border:2px solid #ff0000"></div>
<div class="a" style="left:883px;top:342px;width:256px;height:25px;border:2px solid #ff0000"></div>
</body></html>
